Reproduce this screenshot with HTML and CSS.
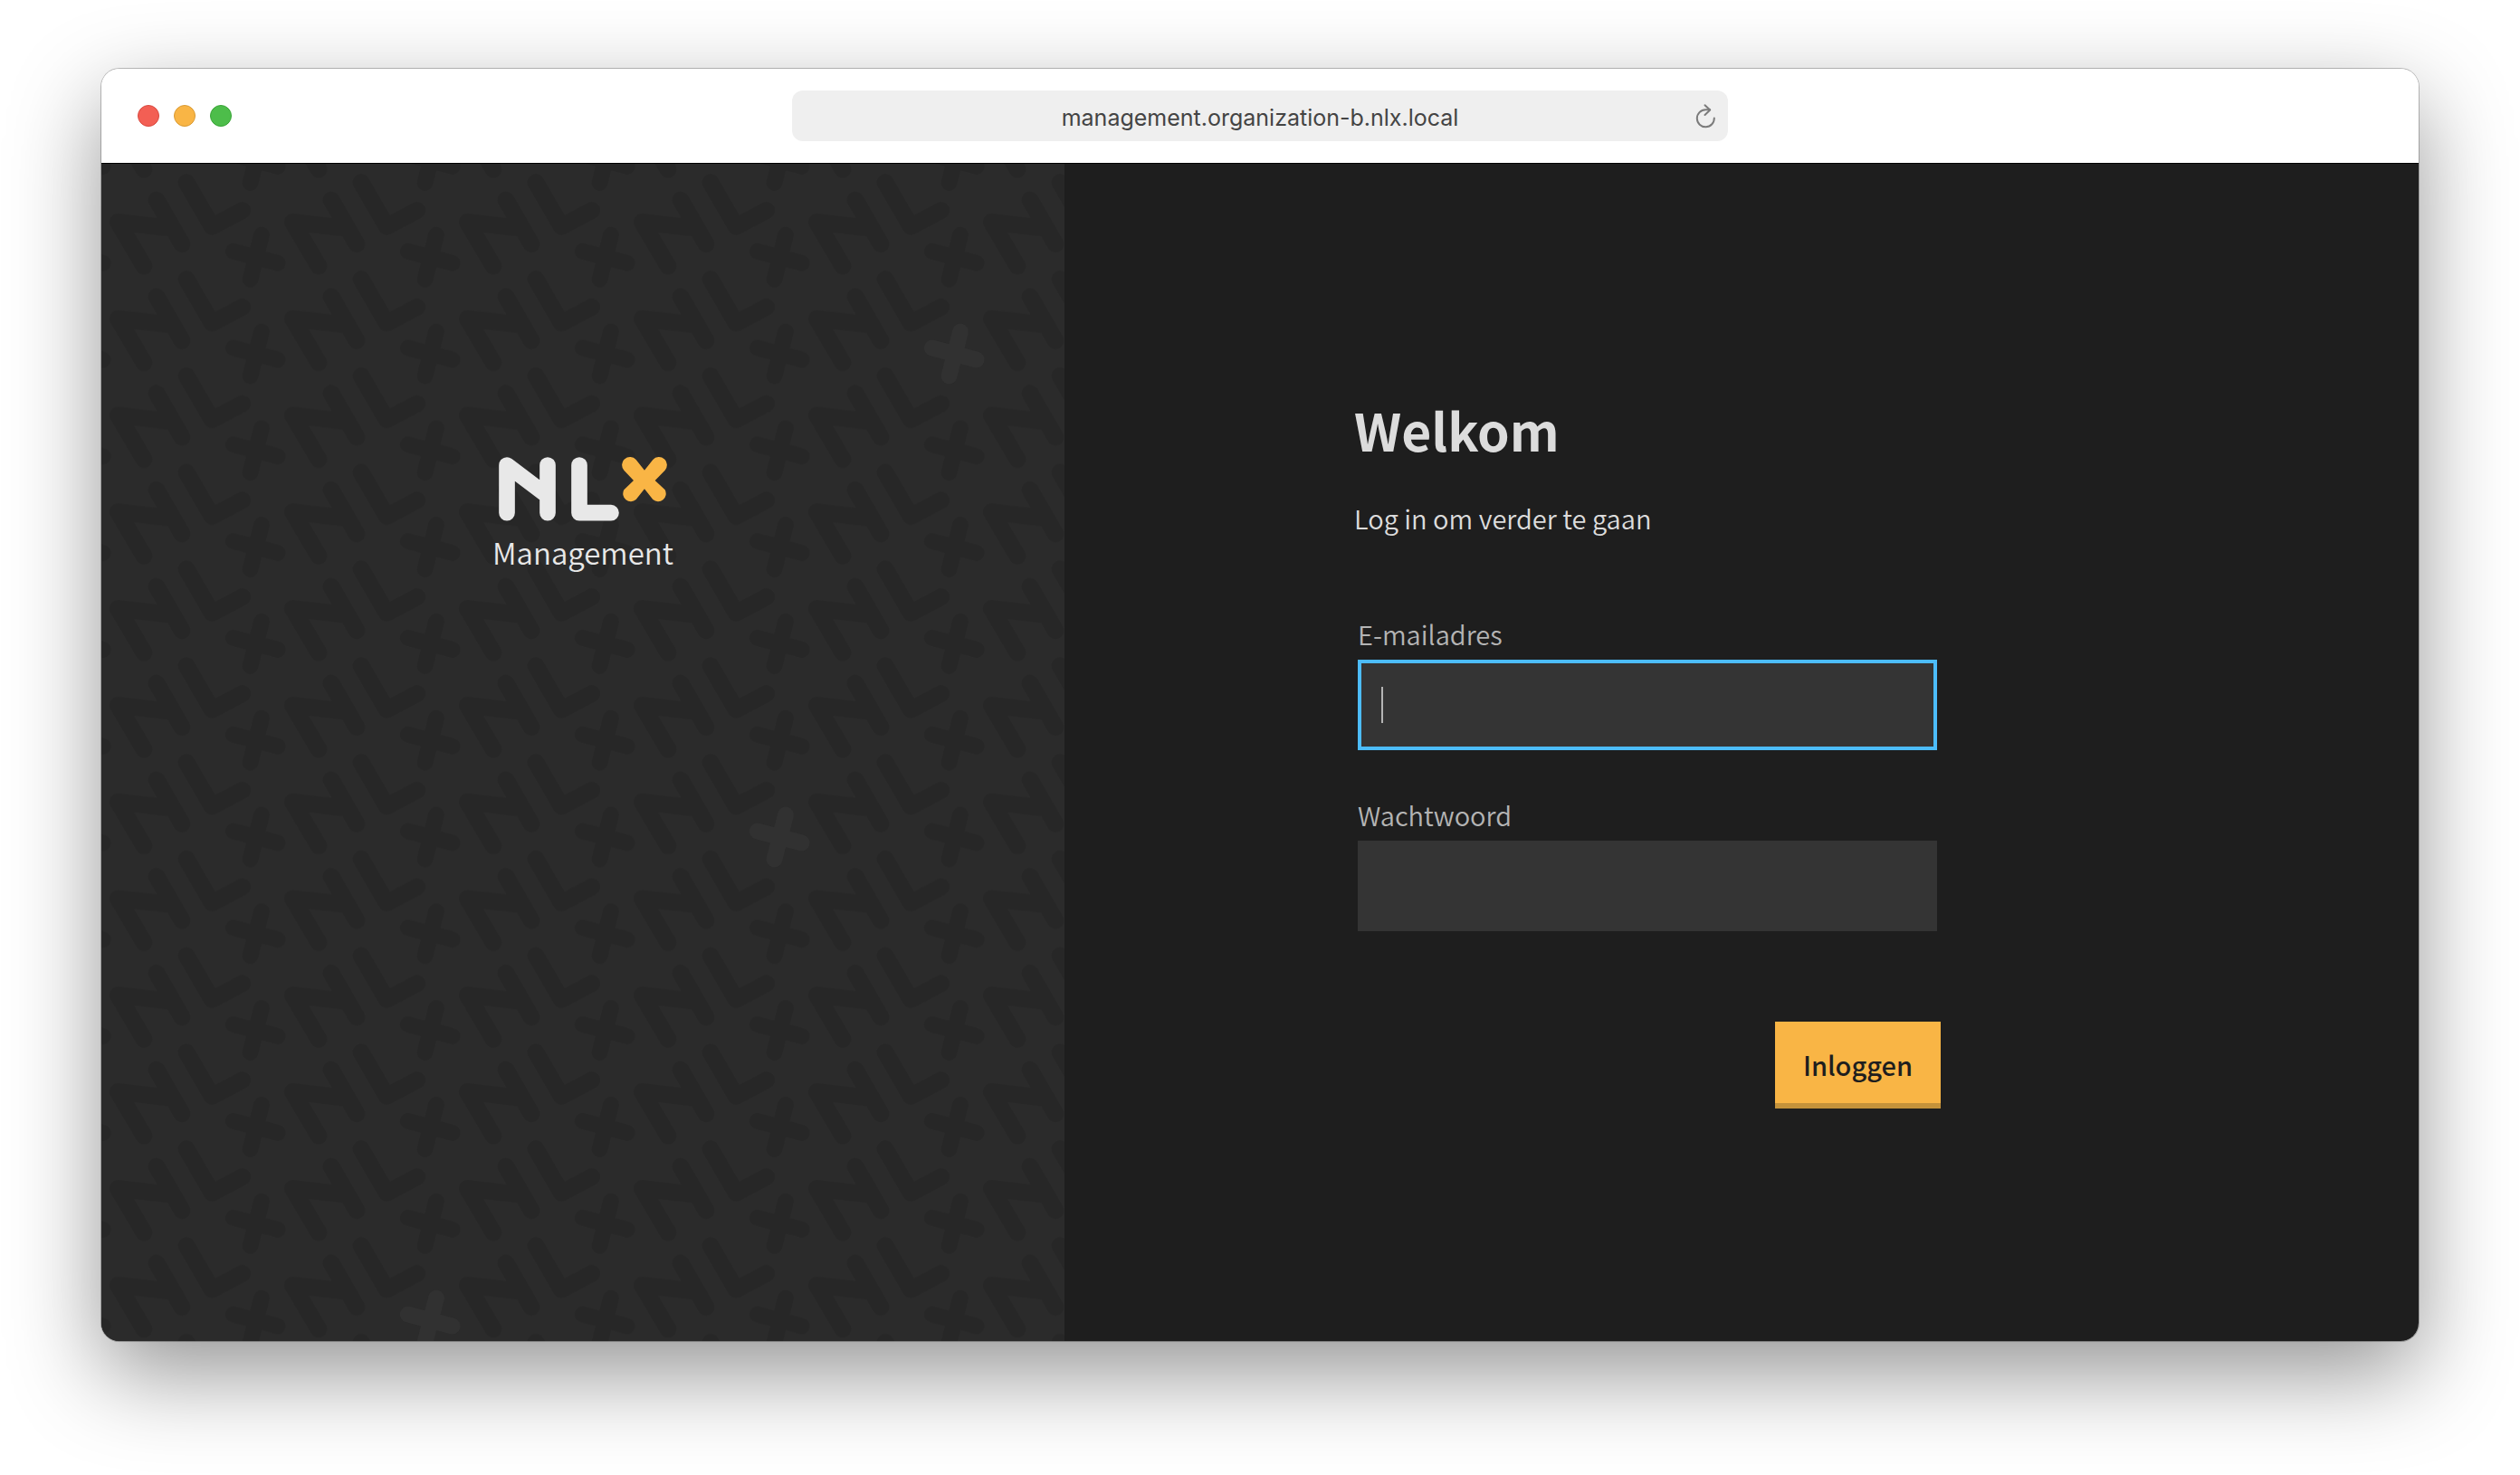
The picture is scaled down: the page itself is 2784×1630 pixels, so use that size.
FILE: index.html
```html
<!DOCTYPE html>
<html lang="nl">
<head>
<meta charset="utf-8">
<meta name="viewport" content="width=device-width, initial-scale=1">
<title>NLX Management</title>
<link rel="stylesheet" href="styles.css">
</head>
<body>
<div class="window">
  <header class="toolbar">
    <div class="lights">
      <span class="light light-close"></span>
      <span class="light light-minimize"></span>
      <span class="light light-zoom"></span>
    </div>
    <div class="address">
      <span class="address-text">management.organization-b.nlx.local</span>
      <button class="reload" type="button" aria-label="Reload">
        <svg width="24" height="28" viewBox="0 0 24 28" fill="none" stroke="#7b7b7b" stroke-width="2" stroke-linecap="round" stroke-linejoin="round">
          <path d="M20.8 16.4A9.5 9.5 0 1 1 11.3 7.3H16"/>
          <path d="M10.5 2.3L16.2 7.6L10.5 13"/>
        </svg>
      </button>
    </div>
  </header>
  <main class="page">
    <section class="brand">
      <svg class="brand-pattern" aria-hidden="true">
        <defs>
          <g id="cross" fill="none" stroke-width="18" stroke-linecap="round">
            <path d="M177 78.7L164.5 127.7M145.8 96.7L194.7 109.7"/>
          </g>
          <g id="tile">
            <path d="M47 113L18.3 64.3L78.7 71.3M61 40L89 88.7M94 20.7L122.3 69.3L155.7 51.5" fill="none" stroke-width="19" stroke-linecap="round" stroke-linejoin="round"/>
            <use href="#cross"/>
          </g>
          <pattern id="letters" width="193" height="106.8" patternUnits="userSpaceOnUse">
            <g stroke="#272727">
              <use href="#tile"/>
              <use href="#tile" x="-193"/>
              <use href="#tile" y="-106.8"/>
              <use href="#tile" x="-193" y="-106.8"/>
            </g>
          </pattern>
        </defs>
        <rect width="100%" height="100%" fill="url(#letters)"/>
        <g stroke="#313131">
          <use href="#cross" x="772" y="106.8"/>
          <use href="#cross" x="579" y="640.8"/>
          <use href="#cross" x="193" y="1174.8"/>
        </g>
      </svg>
      <div class="brand-mark">
        <svg class="logo" viewBox="153 106 558 212" role="img" aria-label="NLX">
          <g fill="none" stroke="#e8e8e8" stroke-width="53" stroke-linecap="round" stroke-linejoin="round">
            <path d="M180 291V133L315 235M315 133V291"/>
            <path d="M420 133V291H525"/>
          </g>
          <path fill="#f9b545" d="M608 115L636 150L664 115A26 26 0 0 1 704 150L671 184L704 215A26 26 0 0 1 664 247L636 212L608 247A26 26 0 0 1 568 215L600 184L568 150A26 26 0 0 1 608 115Z"/>
        </svg>
        <p class="brand-name">Management</p>
      </div>
    </section>
    <section class="login">
      <h1 class="title">Welkom</h1>
      <p class="intro">Log in om verder te gaan</p>
      <form class="form">
        <div class="field">
          <label class="label" for="email">E-mailadres</label>
          <input class="input input-active" id="email" type="email">
        </div>
        <div class="field">
          <label class="label" for="password">Wachtwoord</label>
          <input class="input" id="password" type="password">
        </div>
        <button class="submit" type="submit">Inloggen</button>
      </form>
    </section>
  </main>
</div>
</body>
</html>
```
FILE: styles.css
```css
* {
  box-sizing: border-box;
}

body {
  margin: 0;
  padding: 76px 112px 148px;
  background: #fff;
  font-family: "Source Sans Pro", "Noto Sans CJK SC", sans-serif;
  font-size: 29px;
  line-height: 40px;
}

h1,
p {
  margin: 0;
}

.window {
  display: flex;
  flex-direction: column;
  min-height: calc(100vh - 224px);
  border-radius: 20px;
  overflow: hidden;
  box-shadow: 0 0 0 1px rgba(0, 0, 0, 0.24), 0 36px 100px rgba(0, 0, 0, 0.42);
}

.toolbar {
  display: grid;
  grid-template-columns: 1fr minmax(0, 1034px) 1fr;
  align-items: center;
  padding: 24px 40px;
  background: #fff;
  border-bottom: 1px solid #000;
}

.lights {
  display: flex;
  gap: 16px;
}

.light {
  width: 24px;
  height: 24px;
  border: 1px solid;
  border-radius: 50%;
}

.light-close {
  background: #f35f54;
  border-color: #d9493f;
}

.light-minimize {
  background: #f9b545;
  border-color: #d99a33;
}

.light-zoom {
  background: #4dbd4a;
  border-color: #39a437;
}

.address {
  display: grid;
  grid-template-columns: 1fr auto 1fr;
  align-items: center;
  height: 56px;
  padding: 0 12px;
  border-radius: 12px;
  background: #efefef;
}

.address-text {
  grid-column: 2;
  padding-top: 4px;
  font-family: Inter, sans-serif;
  font-size: 25px;
  color: #444;
}

.reload {
  display: flex;
  justify-self: end;
  padding: 0;
  border: 0;
  background: none;
}

.page {
  flex: 1;
  display: grid;
  grid-template-columns: 532fr 748fr;
  background: #1e1e1e;
}

.brand {
  position: relative;
  background: #2b2b2b;
}

.brand-pattern {
  position: absolute;
  inset: 0;
  width: 100%;
  height: 100%;
}

.brand-mark {
  position: relative;
  display: flex;
  flex-direction: column;
  align-items: center;
  gap: 14px;
  padding-top: 324px;
}

.logo {
  width: 186px;
  overflow: visible;
}

.brand-name {
  font-size: 33px;
  font-weight: 350;
  color: #e8e8e8;
}

.login {
  padding: 256px 320px 100px;
  color: #dcdcdc;
}

.title {
  font-size: 57px;
  font-weight: 700;
  line-height: 74px;
}

.intro {
  margin-top: 41px;
}

.form {
  display: flex;
  flex-direction: column;
  gap: 51px;
  max-width: 648px;
  margin-top: 88px;
}

.intro,
.label {
  font-weight: 350;
}

.field {
  display: flex;
  flex-direction: column;
  gap: 9px;
  padding: 0 4px;
}

.label {
  color: #b4b4b4;
}

.input {
  width: 100%;
  height: 100px;
  padding: 0 22px;
  border: 4px solid #343434;
  border-radius: 0;
  background: #343434;
  color: #dcdcdc;
  font: inherit;
  outline: none;
}

.input-active {
  border-color: #4cbcfb;
  background: linear-gradient(#b4b4b4, #b4b4b4) 22px 50% / 2px 40px no-repeat #343434;
}

.submit {
  align-self: flex-end;
  height: 96px;
  margin-top: 49px;
  padding: 4px 31px 0;
  border: 0;
  border-bottom: 6px solid #c4923a;
  background: #f9b545;
  color: #1e1e1e;
  font: inherit;
  font-weight: 500;
}
```
